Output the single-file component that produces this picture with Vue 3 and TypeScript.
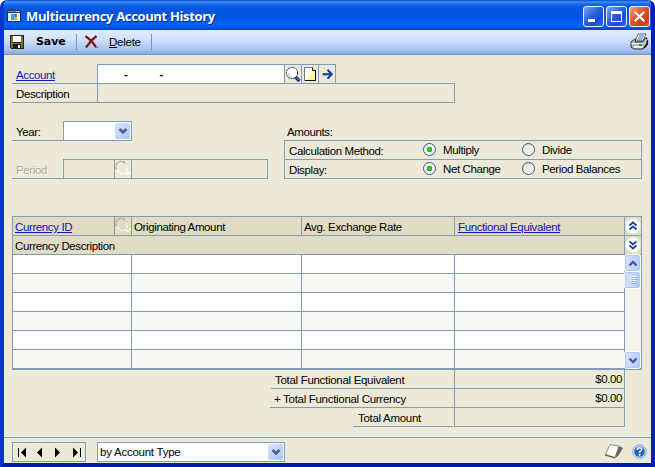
<script setup lang="ts">
import { ref } from 'vue'

const account = '-'
const method = ref('Multiply')
const display = ref('Net Change')
const rows = [1, 2, 3, 4, 5, 6]

interface Choice {
  label: string
  options: string[]
}
const choices: Choice[] = [
  { label: 'Calculation Method:', options: ['Multiply', 'Divide'] },
  { label: 'Display:', options: ['Net Change', 'Period Balances'] },
]

function isOn(option: string): boolean {
  return option === method.value || option === display.value
}

function pick(row: number, option: string): void {
  if (row === 0) method.value = option
  else display.value = option
}
</script>

<template>
  <div class="window">
    <header class="titlebar">
      <svg class="app-icon" width="14" height="12" viewBox="0 0 14 12" shape-rendering="crispEdges">
        <rect width="14" height="12" fill="#24345f" />
        <rect x="1" y="1" width="12" height="1" fill="#6f8fc8" />
        <rect x="9" y="1" width="1" height="1" fill="#fff" /><rect x="11" y="1" width="1" height="1" fill="#fff" />
        <rect x="1" y="3" width="12" height="8" fill="#ecead6" />
        <path d="M7 4h3v3H7z" fill="#2f86e0" /><path d="M4 4h3v3H4z" fill="#5b9bcc" />
        <path d="M4 7h3v3H4z" fill="#3e9be8" /><path d="M7 7h3v3H7z" fill="#d5b52c" />
      </svg>
      <h1>Multicurrency Account History</h1>
      <div class="caption-buttons">
        <button class="cap" aria-label="Minimize">
          <svg width="19" height="19" viewBox="0 0 19 19"><path d="M4 12h7v3H4z" fill="#fff" /></svg>
        </button>
        <button class="cap" aria-label="Maximize">
          <svg width="19" height="19" viewBox="0 0 19 19"><path d="M4 4h11v11H4zM5 7v7h9V7z" fill="#fff" fill-rule="evenodd" /></svg>
        </button>
        <button class="cap close" aria-label="Close">
          <svg width="19" height="19" viewBox="0 0 19 19"><path d="M4.700 4.700l9.600 9.600M14.300 4.700l-9.600 9.600" stroke="#fff" stroke-width="2.200" /></svg>
        </button>
      </div>
    </header>

    <div class="toolbar">
      <svg class="disk" width="14" height="14" viewBox="0 0 14 14" shape-rendering="crispEdges">
        <path d="M0 0h14v14H1L0 13z" fill="#25250f" />
        <path d="M1 1h2v7h8V1h2v12H1z" fill="#77752c" />
        <path d="M3 1h8v6H3z" fill="#f5f7fb" />
        <path d="M3 9h8v4H3z" fill="#191b18" /><path d="M8 10h2v3H8z" fill="#eee" />
      </svg>
      <span class="save">Save</span>
      <i class="sep"></i>
      <svg class="cross" width="15" height="14" viewBox="0 0 15 14">
        <path d="M1.500 1.200C5 3.500 9.500 8 12 12.200M12.500 1C8.500 4 4.500 8.500 2 12.500" fill="none" stroke="#7c1015" stroke-width="2.200" />
        <path d="M13 12h1v1h-1z" fill="#7c1015" />
      </svg>
      <span class="delete"><u>D</u>elete</span>
      <i class="sep"></i>
      <svg class="printer" width="19" height="18" viewBox="0 0 19 18">
        <path d="M5 8L8 1h8l-3 7z" fill="#fff" stroke="#444" stroke-width=".8" />
        <path d="M9 3h5M8 5h5M7 7h5" stroke="#3266c8" />
        <path d="M1 9l4-3h1l-1 3h8l2-4h2v5l-4 6H4l-3-2z" fill="#b8bdb9" stroke="#222" stroke-width=".9" />
        <path d="M1.500 10.500h12l4-4" fill="none" stroke="#eee" />
        <path d="M4 14h9" stroke="#fff" stroke-width="1.500" /><path d="M9 12h3" stroke="#0ca22c" stroke-width="2" />
        <path d="M14 15l3.500-4V7" fill="none" stroke="#111" stroke-width="1.300" />
      </svg>
    </div>

    <main>
      <section class="line">
        <label class="lab w85"><a>Account</a></label>
        <div class="cell top white acct"><span>{{ account }}</span><span>{{ account }}</span></div>
        <div class="cell top sq">
          <svg width="16" height="18" viewBox="0 0 16 18">
            <circle cx="7" cy="8" r="5.600" fill="#fff" stroke="#292323" stroke-dasharray="2 .7" />
            <path d="M3.500 8a4 4 0 0 0 3 4" fill="none" stroke="#a7b6d0" />
            <path d="M10.500 12l4 4" stroke="#112c70" stroke-width="3.200" /><path d="M11.500 12.500l2.500 2.500" stroke="#5b94ee" />
          </svg>
        </div>
        <div class="cell top sq">
          <svg width="16" height="18" viewBox="0 0 16 18">
            <path d="M2.500 2.500h8l3 3v10h-11z" fill="#fffef0" stroke="#777" />
            <path d="M4 15l9-9v9z" fill="#faf5a0" /><path d="M10.500 2.500v3h3" fill="#fff" stroke="#111" />
            <path d="M13.500 5v10.500H3" fill="none" stroke="#111" />
          </svg>
        </div>
        <div class="cell top sq">
          <svg width="16" height="18" viewBox="0 0 16 18"><path d="M3.500 9.200h9M8.500 4.800l4.300 4.400-4.300 4.400" fill="none" stroke="#0b3aa0" stroke-width="2" /></svg>
        </div>
        <i class="end"></i>
      </section>
      <section class="line">
        <label class="lab w85">Description</label>
        <div class="cell desc"></div>
        <i class="end"></i>
      </section>

      <div class="filters">
        <div class="left">
          <section class="line">
            <label class="lab w51">Year:</label>
            <div class="cell top white year"><span class="drop"><svg width="10" height="7" viewBox="0 0 10 7"><path d="M1.500 1l3.500 3.500L8.500 1" fill="none" stroke="#455f90" stroke-width="2.500" /></svg></span></div>
            <i class="end"></i>
          </section>
          <section class="line period">
            <label class="lab w51 disabled">Period</label>
            <div class="cell top p1"></div>
            <div class="cell top sq"><svg width="16" height="18" viewBox="0 0 16 18"><path d="M1.500 9a5 5 0 0 1 9-5" fill="none" stroke="#aaa795" stroke-width="1.300" stroke-dasharray="3 .8" /><path d="M2.500 10a5.500 5.500 0 0 0 9.500 1.500V6M11 14h4v-3" fill="none" stroke="#fff" stroke-width="1.300" stroke-dasharray="3 1" /></svg></div>
            <div class="cell top p2"></div>
            <i class="end"></i>
          </section>
        </div>
        <div class="right">
          <div class="amounts-title">Amounts:</div>
          <div class="options">
            <div v-for="(choice, i) in choices" :key="choice.label" class="option-row">
              <span class="choice">{{ choice.label }}</span>
              <span v-for="option in choice.options" :key="option" class="radio" @click="pick(i, option)">
                <i class="dot" :class="{ on: isOn(option) }"></i><span>{{ option }}</span>
              </span>
            </div>
          </div>
        </div>
      </div>

      <div class="grid">
        <div class="table">
          <div class="head">
            <span class="c c0"><a>Currency ID</a></span>
            <span class="c cs"><svg width="16" height="18" viewBox="0 0 16 18"><path d="M1.500 9a5 5 0 0 1 9-5" fill="none" stroke="#aaa795" stroke-width="1.300" stroke-dasharray="3 .8" /><path d="M2.500 10a5.500 5.500 0 0 0 9.500 1.500V6M11 14h4v-3" fill="none" stroke="#fff" stroke-width="1.300" stroke-dasharray="3 1" /></svg></span>
            <span class="c c1">Originating Amount</span>
            <span class="c c2">Avg. Exchange Rate</span>
            <span class="c c3"><a>Functional Equivalent</a></span>
          </div>
          <div class="head sub"><span class="c">Currency Description</span></div>
          <div v-for="row in rows" :key="row" class="row">
            <span class="r0"></span><span class="r1"></span><span class="r2"></span><span class="r3"></span>
          </div>
        </div>
        <div class="side">
          <div class="expand"><svg width="16" height="18" viewBox="0 0 16 18"><circle cx="8" cy="9" r="7.500" fill="#fff" /><path d="M4.500 8.500L8 5.300l3.500 3.200M4.500 12.500L8 9.300l3.500 3.200" fill="none" stroke="#14408f" stroke-width="1.700" /></svg></div>
          <div class="expand"><svg width="16" height="18" viewBox="0 0 16 18"><circle cx="8" cy="9" r="7.500" fill="#fff" /><path d="M4.500 5.300L8 8.500l3.500-3.200M4.500 9.300L8 12.500l3.500-3.200" fill="none" stroke="#14408f" stroke-width="1.700" /></svg></div>
          <div class="scroll">
            <span class="sb"><svg width="10" height="7" viewBox="0 0 10 7"><path d="M1.500 5.500L5 2l3.500 3.500" fill="none" stroke="#455f90" stroke-width="2.300" /></svg></span>
            <span class="sb thumb"><svg width="8" height="8" viewBox="0 0 8 8"><path d="M1 .5h6M1 2.500h6M1 4.500h6M1 6.500h6" stroke="#eef4ff" /><path d="M2 1.500h6M2 3.500h6M2 5.500h6M2 7.500h6" stroke="#9cb2ec" /></svg></span>
            <i class="track"></i>
            <span class="sb"><svg width="10" height="7" viewBox="0 0 10 7"><path d="M1.500 1.500L5 5l3.500-3.500" fill="none" stroke="#455f90" stroke-width="2.300" /></svg></span>
          </div>
        </div>
      </div>

      <div class="totals">
        <div class="total"><span class="tl a">Total Functional Equivalent</span><span class="tv">$0.00</span></div>
        <div class="total"><span class="tl b">+ Total Functional Currency</span><span class="tv">$0.00</span></div>
        <div class="total"><span class="tl c3l">Total Amount</span><i class="gap"></i><span class="tv"></span></div>
      </div>
    </main>

    <footer>
      <div class="nav">
        <svg width="72" height="18" viewBox="0 0 72 18" fill="#000">
          <path d="M5 5h1v9H5zM13 4.500v10L8 9.500zM29 4.500v10L24 9.500zM42 4.500v10l5-5zM60 4.500v10l5-5zM67 5h1v9h-1z" />
        </svg>
      </div>
      <div class="sort"><span>by Account Type</span><span class="drop"><svg width="10" height="7" viewBox="0 0 10 7"><path d="M1.500 1l3.500 3.500L8.500 1" fill="none" stroke="#455f90" stroke-width="2.500" /></svg></span></div>
      <svg class="note" width="20" height="17" viewBox="0 0 20 17">
        <path d="M6 1.500l9 1.500-4 11.500-9.500-3z" fill="#fff" stroke="#8a887c" />
        <path d="M15 3l4 2-5 8-3 2z" fill="#66645a" /><path d="M1 12l10 3" stroke="#55534a" stroke-width="1.300" />
      </svg>
      <svg class="help" width="15" height="15" viewBox="0 0 15 15">
        <circle cx="7.500" cy="7.500" r="6.800" fill="#dbe9fa" stroke="#7ba4dc" /><circle cx="7.500" cy="7.500" r="5.300" fill="#2463c4" />
        <path d="M5.300 6q0-2.300 2.200-2.300T9.800 5.500Q9.800 6.800 7.600 7.600v1.200" fill="none" stroke="#fff" stroke-width="1.500" /><circle cx="7.600" cy="10.800" r="1" fill="#fff" />
      </svg>
    </footer>
  </div>
</template>

<style>
body { margin: 0; overflow: hidden; }
</style>

<style scoped>
* { box-sizing: border-box; }
.window {
  width: 655px; height: 467px; display: flex; flex-direction: column;
  border: solid #0834d2; border-width: 0 4px 4px; border-radius: 7px 7px 0 0;
  border-right-color: #0520b0; border-bottom-color: #041da8;
  background: #ece9d8; color: #000; overflow: hidden;
  font: 11.500px/18px "Liberation Sans", Arial, sans-serif; letter-spacing: -.38px; white-space: nowrap;
}
svg { display: block; flex: none; }
a { color: #1414b4; text-decoration: underline; }
i { display: block; }
.titlebar {
  height: 30px; flex: none; margin: 0 -4px; padding: 6px 5px 0 7px; display: flex;
  background: linear-gradient(#0a47c0 0, #3b91fb 2px, #1268ee 4px, #0556dd 8px, #0455e4 17px, #0263fb 25px, #0154e8 28px, #003dc4 30px);
}
.app-icon { margin-top: 4px; }
h1 { margin: 1px 0 0 5px; font: bold 13px/18px "Open Sans", "Noto Sans", sans-serif; letter-spacing: -.35px; color: #fff; text-shadow: 1px 1px #0a2a80; }
.caption-buttons { margin-left: auto; display: flex; gap: 2px; }
.cap { width: 21px; height: 21px; padding: 0; border: 1px solid #e6eefc; border-radius: 3px; background: linear-gradient(135deg, #7ea2f0, #2b5fde 45%, #1c4bd0 70%, #2f6cf0); }
.cap.close { background: linear-gradient(135deg, #f0a088, #dd5330 45%, #c8401c 75%, #d85432); }
.toolbar {
  height: 25px; flex: none; display: flex; align-items: center; padding: 0 0 1px 6px;
  background: linear-gradient(#e0edff, #cfe0fb 40%, #a9c3f0 78%, #86a9e2 96%, #7896bd 96%);
}
.save { margin-left: 12px; width: 40px; font: bold 11px/18px "DejaVu Sans", sans-serif; letter-spacing: -.1px; }
.sep { width: 1px; height: 16px; background: #7e96bd; }
.cross { margin-left: 7px; }
.delete { margin-left: 10px; width: 42px; letter-spacing: -.25px; }
.printer { margin-left: 478px; }
main { flex: 1; padding: 9px 9px 0 8px; }
.line { display: flex; height: 19px; }
.lab { height: 20px; padding: 2px 0 0 4px; border-bottom: 1px solid #7f9db9; }
.w85 { width: 85px; }
.w51 { width: 51px; }
.cell { height: 20px; border: solid #7f9db9; border-width: 0 0 1px 1px; }
.top { border-top-width: 1px; }
.white { background: #fff; }
.sq { width: 17px; }
.end { width: 1px; background: #7f9db9; height: 20px; }
.acct { width: 187px; display: flex; padding-left: 26px; gap: 32px; font-weight: bold; }
.desc { width: 357px; border-top: 1px solid #7f9db9; }
.filters { display: flex; margin-top: 19px; }
.left { width: 272px; }
.year { width: 68px; padding: 1px; display: flex; justify-content: flex-end; }
.drop { width: 15px; height: 16px; border-radius: 2px; background: linear-gradient(135deg, #d6e3fd, #afc5f7); display: grid; place-items: center; }
.period { margin-top: 19px; }
.disabled { color: #aca899; text-shadow: 1px 1px #fff; }
.p1 { width: 51px; }
.p2 { width: 136px; }
.right { width: 358px; }
.amounts-title { height: 19px; padding: 2px 0 0 3px; }
.options { border: 1px solid #7f9db9; border-bottom: 0; }
.option-row { height: 19px; display: flex; border-bottom: 1px solid #7f9db9; }
.choice { width: 138px; padding: 1px 0 0 4px; }
.radio { display: flex; width: 99px; gap: 7px; }
.radio span { height: 18px; }
.dot { width: 13px; height: 13px; margin-top: 2px; border: 1px solid #305a82; border-radius: 50%; background: linear-gradient(135deg, #dcdcd2, #fff); }
.on { background: radial-gradient(circle at 5.500px 5.500px, #55d551 0, #21a121 2.500px, #f6f7f3 3px); }
.grid { display: flex; margin-top: 37px; height: 154px; border: solid #7f9db9; border-width: 1px 1px 2px; }
.table { width: 611px; }
.head { display: flex; height: 19px; background: #e0dcc4; border-bottom: 1px solid #7f9db9; }
.c { padding: 1px 0 0 2px; }
.c0 { width: 101px; }
.cs, .c1, .c2, .c3 { border-left: 1px solid #7f9db9; }
.cs { width: 17px; padding: 0; }
.c1 { width: 170px; }
.c2 { width: 153px; }
.c3 { width: 170px; padding-left: 3px; }
.row { display: flex; height: 19px; background: #fff; border-bottom: 1px solid #7f9db9; }
.row:nth-child(even) { background: #f7f8f3; }
.row:last-child { height: 18px; border-bottom: 0; }
.row span { height: 100%; }
.r0 { width: 118px; }
.r1, .r2, .r3 { border-left: 1px solid #7f9db9; }
.r1 { width: 170px; }
.r2 { width: 153px; }
.r3 { width: 170px; }
.side { width: 17px; border-left: 1px solid #7f9db9; }
.expand { height: 19px; background: #e0dcc4; border-bottom: 1px solid #7f9db9; }
.scroll { height: 113px; display: flex; flex-direction: column; gap: 1px; background: #f5f4ee; }
.sb { width: 15px; height: 16px; flex: none; border-radius: 2px; border: 1px solid #b6c7f3; background: linear-gradient(90deg, #d2e0fe, #b8ccfa); display: grid; place-items: center; box-shadow: 0 0 0 1px #fff; }
.track { flex: 1; }
.totals { display: flex; flex-direction: column; align-items: flex-end; padding-right: 17px; }
.total { height: 19px; display: flex; }
.tl { border-bottom: 1px solid #7f9db9; padding-top: 1px; letter-spacing: -.3px; }
.tl.a { width: 183px; padding-left: 4px; }
.tl.b { width: 184px; padding-left: 4px; }
.c3l { width: 100px; padding-left: 5px; }
.gap { width: 1px; }
.tv { width: 171px; border: solid #7f9db9; border-width: 0 1px 1px; text-align: right; padding-right: 2px; letter-spacing: -.4px; }
footer { height: 26px; flex: none; display: flex; padding: 4px 0 0 8px; border-top: 1px solid #7f9db9; }
.nav { width: 74px; height: 20px; border: 1px solid #7f9db9; }
.sort { width: 188px; height: 20px; margin-left: 11px; padding: 1px 1px 0 2px; border: 1px solid #7f9db9; background: #fff; display: flex; justify-content: space-between; line-height: 17px; letter-spacing: -.25px; }
.note { margin: 1px 0 0 319px; }
.help { margin: 2px 0 0 8px; }
</style>
